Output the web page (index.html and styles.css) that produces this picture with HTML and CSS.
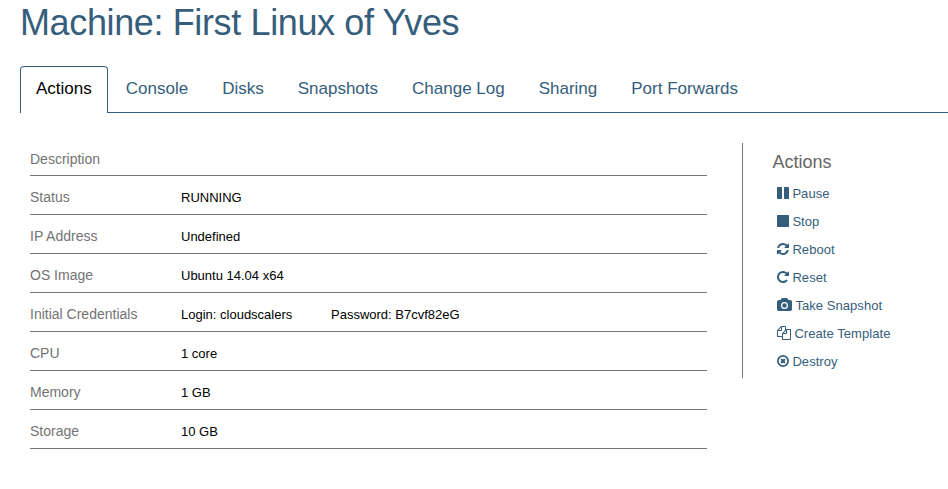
FILE: index.html
```html
<!DOCTYPE html>
<html lang="en">
<head>
<meta charset="utf-8">
<title>Machine: First Linux of Yves</title>
<link rel="stylesheet" href="styles.css">
</head>
<body>
<h1>Machine: First Linux of Yves</h1>
<nav class="tabs">
<a class="tab active">Actions</a><a class="tab">Console</a><a class="tab">Disks</a><a class="tab">Snapshots</a><a class="tab">Change Log</a><a class="tab">Sharing</a><a class="tab">Port Forwards</a>
</nav>
<main class="content">
<dl class="details">
<div class="row"><dt>Description</dt><dd></dd></div>
<div class="row"><dt>Status</dt><dd>RUNNING</dd></div>
<div class="row"><dt>IP Address</dt><dd>Undefined</dd></div>
<div class="row"><dt>OS Image</dt><dd>Ubuntu 14.04 x64</dd></div>
<div class="row"><dt>Initial Credentials</dt><dd class="login">Login: cloudscalers</dd><dd>Password: B7cvf82eG</dd></div>
<div class="row"><dt>CPU</dt><dd>1 core</dd></div>
<div class="row"><dt>Memory</dt><dd>1 GB</dd></div>
<div class="row"><dt>Storage</dt><dd>10 GB</dd></div>
</dl>
<aside class="side">
<h2>Actions</h2>
<ul>
<li><svg class="icon" width="12" height="14" viewBox="0 0 1536 1792"><path d="M1536 192v1408q0 26-19 45t-45 19H960q-26 0-45-19t-19-45V192q0-26 19-45t45-19h512q26 0 45 19t19 45zm-896 0v1408q0 26-19 45t-45 19H64q-26 0-45-19t-19-45V192q0-26 19-45t45-19h512q26 0 45 19t19 45z"/></svg><span>Pause</span></li>
<li><svg class="icon" width="12" height="14" viewBox="0 0 1536 1792"><path d="M1536 192v1408q0 26-19 45t-45 19H64q-26 0-45-19t-19-45V192q0-26 19-45t45-19h1408q26 0 45 19t19 45z"/></svg><span>Stop</span></li>
<li><svg class="icon" width="12" height="14" viewBox="0 0 1536 1792"><path d="M1511 1056q0 5-1 7-64 268-268 434.500T764 1664q-146 0-282.500-55T238 1452l-129 129q-19 19-45 19t-45-19-19-45v-448q0-26 19-45t45-19h448q26 0 45 19t19 45-19 45l-137 137q71 66 161 102t187 36q134 0 250-65t186-179q11-17 53-117 8-23 30-23h192q13 0 22.500 9.500t9.500 22.500zm25-800v448q0 26-19 45t-45 19h-448q-26 0-45-19t-19-45 19-45l138-138Q969 384 768 384q-134 0-250 65T332 628q-11 17-53 117-8 23-30 23H50q-13 0-22.500-9.500T18 736v-7q65-268 270-434.500T768 128q146 0 284 55.500T1297 340l130-129q19-19 45-19t45 19 19 45z"/></svg><span>Reboot</span></li>
<li><svg class="icon" width="12" height="14" viewBox="0 0 1536 1792"><path d="M1536 256v448q0 26-19 45t-45 19h-448q-42 0-59-40-17-39 14-69l138-138Q969 384 768 384q-104 0-198.500 40.500T406 533 297.500 696.500 257 895t40.500 198.500T406 1257t163.500 108.500T768 1406q119 0 225-52t179-147q7-10 23-12 15 0 25 9l137 138q9 8 9.500 20.500T1358 1385q-109 132-264 204.500T768 1662q-156 0-298-61t-245-164-164-245T0 894t61-298 164-245 245-164 298-61q147 0 284.500 55.500T1297 340l130-129q29-31 70-14 39 17 39 59z"/></svg><span>Reset</span></li>
<li><svg class="icon" width="15" height="14" viewBox="0 0 1920 1792"><path fill-rule="evenodd" d="M960 672a288 288 0 1 1 0 576 288 288 0 0 1 0-576zM1664 256q106 0 181 75t75 181v896q0 106-75 181t-181 75H256q-106 0-181-75T0 1408V512q0-106 75-181t181-75h224l51-136q19-49 69.500-84.500T704 0h512q53 0 103.500 35.500T1389 120l51 136zM960 512a448 448 0 1 0 0 896 448 448 0 0 0 0-896z"/></svg><span>Take Snapshot</span></li>
<li><svg class="icon" width="14" height="14" viewBox="0 0 1792 1792"><path fill-rule="evenodd" d="M1696 384q40 0 68 28t28 68v1216q0 40-28 68t-68 28H736q-40 0-68-28t-28-68v-288H96q-40 0-68-28t-28-68V640q0-40 20-88t48-76L476 68q28-28 76-48t88-20h416q40 0 68 28t28 68v328q68-40 128-40zm-544 213L853 896h299zM512 213L213 512h299zm196 647l316-316V128H640v416q0 40-28 68t-68 28H128v640h512v-256q0-40 20-88t48-76zm956 804V512h-384v416q0 40-28 68t-68 28H768v640z"/></svg><span>Create Template</span></li>
<li><svg class="icon" width="12" height="14" viewBox="0 0 1536 1792"><path fill-rule="evenodd" d="M768 128a768 768 0 1 1 0 1536 768 768 0 0 1 0-1536zm0 224a544 544 0 1 0 0 1088 544 544 0 0 0 0-1088zM622 560l146 146 146-146 190 190-146 146 146 146-190 190-146-146-146 146-190-190 146-146-146-146z"/></svg><span>Destroy</span></li>
</ul>
</aside>
</main>
</body>
</html>
```
FILE: styles.css
```css
* { box-sizing: border-box; }
body { margin: 0; background: #fff; color: #000; font-family: "Liberation Sans", Arial, sans-serif; font-size: 13px; overflow: hidden; }
h1, h2, dl, dd, ul { margin: 0; padding: 0; font-weight: normal; }
h1 { margin-left: 20px; height: 66px; line-height: 46px; font-size: 36px; letter-spacing: -0.37px; color: #355e7c; white-space: nowrap; }
.tabs { display: flex; height: 47px; margin-left: 20px; border-bottom: 1px solid #355e7c; }
.tab { height: 46px; line-height: 44px; padding: 0 15px; margin-right: 2px; border: 1px solid transparent; font-size: 17px; color: #355e7c; white-space: nowrap; }
.tab.active { height: 47px; color: #000; background: #fff; border-color: #355e7c; border-bottom: 0; border-radius: 4px 4px 0 0; }
.content { display: flex; align-items: flex-start; padding: 30px 0 0 30px; }
.details { width: 677px; }
.row { display: flex; height: 39px; border-bottom: 1px solid #777; line-height: 43px; white-space: nowrap; }
.row:first-child { height: 33px; line-height: 33px; }
dt { width: 151px; font-size: 14px; color: #737375; }
.login { width: 150px; }
.side { width: 180px; height: 235px; margin-left: 35px; padding-left: 29.5px; border-left: 1px solid #777; color: #355e7c; }
h2 { height: 36px; line-height: 38px; font-size: 18px; color: #666; }
ul { list-style: none; padding-left: 4.5px; }
li { display: flex; align-items: center; height: 28px; gap: 3.4px; white-space: nowrap; letter-spacing: 0.06px; }
.icon { fill: currentColor; flex: none; }
```
